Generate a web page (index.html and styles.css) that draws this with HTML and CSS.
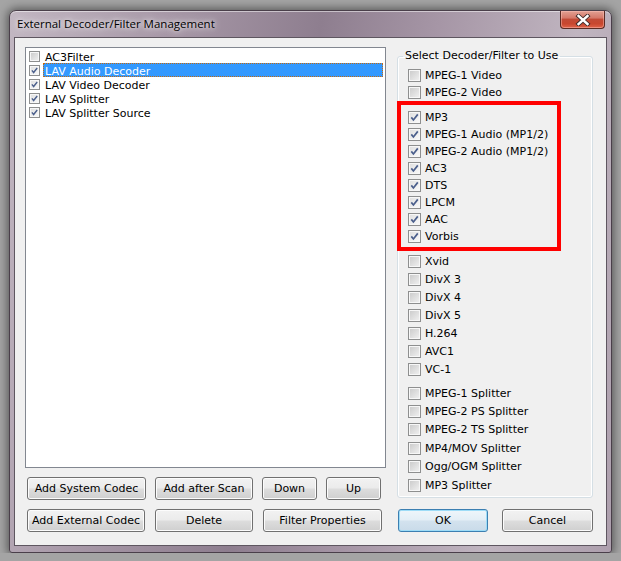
FILE: index.html
```html
<!DOCTYPE html>
<html>

<head>
    <title>External Decoder/Filter Management</title>
    <link rel="stylesheet" href="styles.css">
</head>

<body>
    <div class="window">
        <div class="titlebar">
            <span class="title">External Decoder/Filter Management</span>
            <div class="close">
                <svg width="16" height="12" viewBox="0 0 16 12">
                    <path d="M3.5 2 L12.5 10 M12.5 2 L3.5 10" stroke="#3a2a2a" stroke-width="4.2" stroke-linecap="square" />
                    <path d="M3.5 2 L12.5 10 M12.5 2 L3.5 10" stroke="#ffffff" stroke-width="2.4" stroke-linecap="square" />
                </svg>
            </div>
        </div>

        <div class="client">
            <!-- filter list and its buttons -->
            <div class="left">
                <div class="listbox">
                    <div class="item"><span class="cb small"></span><span class="label">AC3Filter</span></div>
                    <div class="item"><span class="cb small checked"><svg viewBox="0 0 11 11"><path d="M2.3 5.4 L4.4 8 L8.8 2.4" /></svg></span><span class="label selected">LAV Audio Decoder</span></div>
                    <div class="item"><span class="cb small checked"><svg viewBox="0 0 11 11"><path d="M2.3 5.4 L4.4 8 L8.8 2.4" /></svg></span><span class="label">LAV Video Decoder</span></div>
                    <div class="item"><span class="cb small checked"><svg viewBox="0 0 11 11"><path d="M2.3 5.4 L4.4 8 L8.8 2.4" /></svg></span><span class="label">LAV Splitter</span></div>
                    <div class="item"><span class="cb small checked"><svg viewBox="0 0 11 11"><path d="M2.3 5.4 L4.4 8 L8.8 2.4" /></svg></span><span class="label">LAV Splitter Source</span></div>
                </div>
                <div class="btn-row first">
                    <button class="btn w119">Add System Codec</button>
                    <button class="btn w98">Add after Scan</button>
                    <button class="btn w55">Down</button>
                    <button class="btn w55">Up</button>
                </div>
                <div class="btn-row second">
                    <button class="btn w118">Add External Codec</button>
                    <button class="btn w98">Delete</button>
                    <button class="btn w119">Filter Properties</button>
                </div>
            </div>

            <!-- decoder/filter selection -->
            <div class="right">
                <fieldset class="group">
                    <legend>Select Decoder/Filter to Use</legend>
                    <div class="section s1" id="video"></div>
                    <div class="section s2" id="audio"></div>
                    <div class="section s3" id="codecs"></div>
                    <div class="section s4" id="splitters"></div>
                </fieldset>
                <div class="dlg-row">
                    <button class="btn default">OK</button>
                    <button class="btn cancel">Cancel</button>
                </div>
            </div>
        </div>
    </div>

    <div class="redbox"></div>

    <script>
        // Checkbox groups
        const groups = {
            video: [['MPEG-1 Video', false], ['MPEG-2 Video', false]],
            audio: [['MP3', true], ['MPEG-1 Audio (MP1/2)', true], ['MPEG-2 Audio (MP1/2)', true], ['AC3', true],
                ['DTS', true], ['LPCM', true], ['AAC', true], ['Vorbis', true]],
            codecs: [['Xvid', false], ['DivX 3', false], ['DivX 4', false], ['DivX 5', false], ['H.264', false],
                ['AVC1', false], ['VC-1', false]],
            splitters: [['MPEG-1 Splitter', false], ['MPEG-2 PS Splitter', false], ['MPEG-2 TS Splitter', false],
                ['MP4/MOV Splitter', false], ['Ogg/OGM Splitter', false], ['MP3 Splitter', false]]
        };

        const check = '<svg viewBox="0 0 11 11"><path d="M2.3 5.4 L4.4 8 L8.8 2.4" /></svg>';

        Object.keys(groups).forEach(id => {
            const box = document.getElementById(id);
            groups[id].forEach(([name, on]) => {
                const row = document.createElement('div');
                row.className = 'opt';
                row.innerHTML = '<span class="cb' + (on ? ' checked">' + check : '">') + '</span><span>' + name + '</span>';
                box.appendChild(row);
            });
        });
    </script>
</body>
</html>
```

FILE: styles.css
```css
/* Windows 7 style dialog */
body {
    margin: 0;
    background-color: #a4a4a4;
    font-family: 'DejaVu Sans', sans-serif;
    font-size: 11px;
    color: #000;
}

.window {
    box-sizing: border-box;
    width: 603px;
    height: 543px;
    margin: 10px 0 0 9px;
    border: 1px solid #4a3f4a;
    border-radius: 7px 7px 3px 3px;
    background: linear-gradient(100deg, #c2b7c2 0%, #a899a8 22%, #8e7e8f 45%, #a696a6 62%, #c0b5c0 82%, #ad9fad 100%);
    box-shadow: 0 0 9px 2px rgba(0, 0, 0, 0.45), inset 0 1px 0 rgba(255, 255, 255, 0.5);
}

.titlebar {
    display: flex;
    align-items: flex-start;
    height: 26px;
}

.title {
    font-family: 'Open Sans', sans-serif;
    font-size: 11.5px;
    color: #000;
    margin: 5px 0 0 7px;
    text-shadow: 0 0 8px rgba(255, 255, 255, 0.9), 0 0 4px rgba(255, 255, 255, 0.8);
}

.close {
    margin-left: auto;
    margin-right: 6px;
    width: 45px;
    height: 18px;
    box-sizing: border-box;
    border: 1px solid #5a2b24;
    border-top: none;
    border-radius: 0 0 4px 4px;
    background: linear-gradient(#e2a093 0%, #d5796a 40%, #c24a36 50%, #c8472f 75%, #e0634a 100%);
    box-shadow: inset 0 0 0 1px rgba(255, 200, 190, 0.45);
    display: flex;
    justify-content: center;
    align-items: center;
}

.client {
    box-sizing: border-box;
    width: 593px;
    height: 509px;
    margin-left: 4px;
    border: 1px solid #5e5660;
    background-color: #f0f0f0;
    display: flex;
    padding: 9px 13px 0 10px;
    gap: 11px;
}

.left {
    width: 361px;
}

.listbox {
    box-sizing: border-box;
    height: 421px;
    border: 1px solid #828790;
    background-color: #fff;
    padding: 1px 2px 0 3px;
}

.item {
    display: flex;
    align-items: center;
    height: 14px;
}

.label {
    flex: 1;
    box-sizing: border-box;
    height: 14px;
    line-height: 13px;
    margin-left: 3px;
    padding-left: 1px;
    padding-top: 1px;
    border: 1px solid transparent;
}

.label.selected {
    background-color: #3399ff;
    color: #fff;
    border: 1px dotted #c56a10;
}

.cb {
    box-sizing: border-box;
    width: 13px;
    height: 13px;
    flex: none;
    border: 1px solid #8e8f8f;
    background: linear-gradient(135deg, #c9c9c9, #f2f2f2);
    box-shadow: inset 0 0 0 1px #f7f7f7;
    display: flex;
}

.cb.small {
    width: 11px;
    height: 11px;
}

.cb.checked {
    background: linear-gradient(135deg, #dedede, #fbfbfb);
}

.cb svg {
    width: 100%;
    height: 100%;
}

.cb path {
    fill: none;
    stroke: #4b5f8c;
    stroke-width: 1.7;
}

.btn-row {
    display: flex;
    padding-left: 2px;
    margin-top: 9px;
    gap: 9px;
}

.btn-row.second {
    gap: 10px;
}

.btn {
    box-sizing: border-box;
    height: 23px;
    padding: 0;
    font-family: 'DejaVu Sans', sans-serif;
    font-size: 11px;
    color: #000;
    border: 1px solid #707070;
    border-radius: 3px;
    background: linear-gradient(#f2f2f2 0%, #ebebeb 48%, #dddddd 52%, #cfcfcf 100%);
    box-shadow: inset 0 0 0 1px #fcfcfc;
}

.w119 { width: 119px; }
.w118 { width: 118px; }
.w98 { width: 98px; }
.w55 { width: 55px; }

.right {
    width: 196px;
    padding-top: 2px;
}

.group {
    box-sizing: border-box;
    height: 449px;
    margin: 0;
    padding: 0;
    border: 1px solid #d5dfe5;
    border-radius: 3px;
    box-shadow: inset 0 0 0 1px #fff;
    min-width: 0;
}

.group legend {
    margin-left: 5px;
    padding: 0 2px;
    line-height: 14px;
}

.section {
    padding-left: 10px;
}

.opt {
    display: flex;
    align-items: center;
    gap: 4px;
}

.s1 { margin-top: 4px; }
.s1 .opt, .s2 .opt { height: 17px; }
.s2 { margin-top: 8px; }
.s3 { margin-top: 7px; }
.s3 .opt { height: 18px; }
.s4 { margin-top: 6px; }
.s4 .opt { height: 18.4px; }

.dlg-row {
    display: flex;
    margin-top: 11px;
    padding-left: 1px;
    gap: 14px;
}

.btn.default {
    width: 90px;
    border-color: #3c7fb1;
    background: linear-gradient(#eef6fb 0%, #e3eef6 48%, #d3e2ee 52%, #c9dbe9 100%);
    box-shadow: inset 0 0 0 1px #9ddcf7;
}

.btn.cancel {
    width: 91px;
}

/* annotation drawn over the screenshot */
.redbox {
    position: absolute;
    left: 397px;
    top: 101px;
    width: 164px;
    height: 150px;
    box-sizing: border-box;
    border: 4px solid #ff0000;
}
```
